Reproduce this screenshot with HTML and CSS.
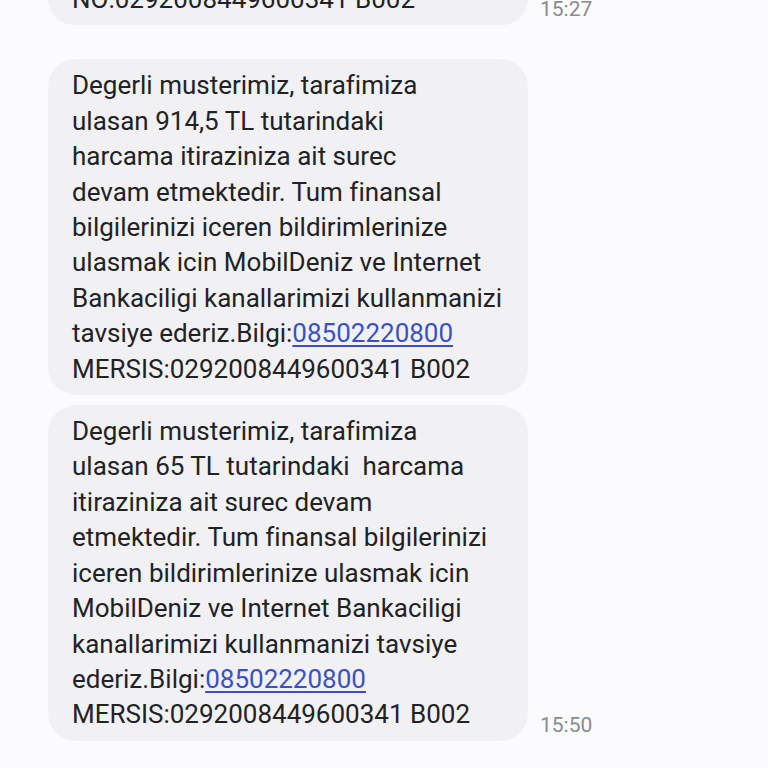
FILE: index.html
```html
<!DOCTYPE html>
<html>
<head>
<meta charset="utf-8">
<link rel="stylesheet" href="styles.css">
</head>
<body>
<div class="chat">
  <div class="row first">
    <div class="bubble">NO:0292008449600341 B002</div>
    <div class="time">15:27</div>
  </div>
  <div class="row second">
    <div class="bubble">Degerli musterimiz, tarafimiza<br>ulasan 914,5 TL tutarindaki<br>harcama itiraziniza ait surec<br>devam etmektedir. Tum finansal<br>bilgilerinizi iceren bildirimlerinize<br>ulasmak icin MobilDeniz ve Internet<br>Bankaciligi kanallarimizi kullanmanizi<br>tavsiye ederiz.Bilgi:<a class="link">08502220800</a><br>MERSIS:0292008449600341 B002</div>
  </div>
  <div class="row third">
    <div class="bubble">Degerli musterimiz, tarafimiza<br>ulasan 65 TL tutarindaki&nbsp; harcama<br>itiraziniza ait surec devam<br>etmektedir. Tum finansal bilgilerinizi<br>iceren bildirimlerinize ulasmak icin<br>MobilDeniz ve Internet Bankaciligi<br>kanallarimizi kullanmanizi tavsiye<br>ederiz.Bilgi:<a class="link">08502220800</a><br>MERSIS:0292008449600341 B002</div>
    <div class="time">15:50</div>
  </div>
</div>
</body>
</html>
```
FILE: styles.css
```css
html, body {
  margin: 0;
  padding: 0;
  background: #fbfbfd;
}
body {
  width: 768px;
  height: 768px;
  overflow: hidden;
  font-family: Roboto, "Noto Sans", sans-serif;
}
.chat {
  display: flex;
  flex-direction: column;
  gap: 10px;
  padding-left: 48px;
}
.row {
  display: flex;
  align-items: flex-end;
  gap: 12px;
}
.first {
  margin-top: -27px;
  margin-bottom: 24px;
}
.bubble {
  width: 480px;
  box-sizing: border-box;
  background: #f1f1f3;
  border-radius: 28px;
  padding: 9px 24px 8px 24px;
  font-size: 26px;
  line-height: 35.4px;
  color: #222224;
  white-space: nowrap;
  font-variant-ligatures: none;
  font-feature-settings: "liga" 0, "calt" 0;
}
.link {
  color: #3a50c4;
  text-decoration: underline;
  text-decoration-thickness: 1.5px;
  text-underline-offset: 3px;
}
.time {
  font-size: 21px;
  color: #8a8a8e;
  padding-bottom: 4px;
}
```
